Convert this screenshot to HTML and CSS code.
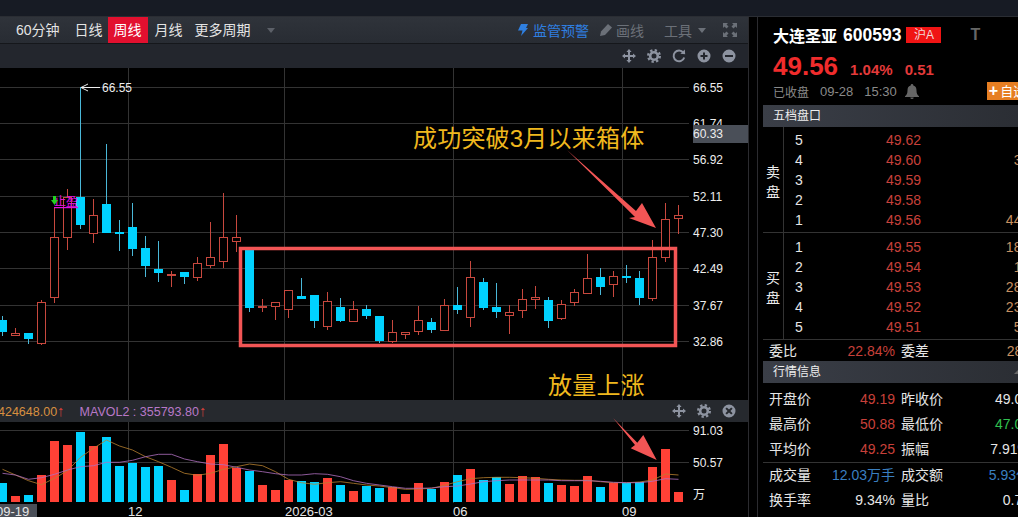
FILE: index.html
```html
<!DOCTYPE html>
<html lang="zh-CN">
<head>
    <meta charset="UTF-8">
    <title>大连圣亚 600593</title>
    <link rel="stylesheet" href="styles.css">
</head>
<body>
    <svg class="icon-defs" width="0" height="0">
        <symbol id="i-move" viewBox="0 0 14 14">
            <path d="M7 0l2.6 3H8v3h3V4.400l3 2.600-3 2.600V8H8v3h1.600L7 14l-2.600-3H6V8H3v1.600L0 7l3-2.600V6h3V3H4.400z"/>
        </symbol>
        <symbol id="i-gear" viewBox="0 0 14 14">
            <circle cx="7" cy="7" r="5.800" fill="none" stroke="currentColor" stroke-width="2.400" stroke-dasharray="2.300 2.250"/>
            <circle cx="7" cy="7" r="3.800" fill="none" stroke="currentColor" stroke-width="2.600"/>
        </symbol>
        <symbol id="i-refresh" viewBox="0 0 14 14">
            <path d="M11.300 3.600A5.400 5.400 0 1 0 12.200 8.500" fill="none" stroke="currentColor" stroke-width="2"/>
            <path d="M8.400 4.800L13.200 5.200 12.800 0.600z"/>
        </symbol>
        <symbol id="i-plus" viewBox="0 0 14 14">
            <path fill-rule="evenodd" d="M7 .5a6.500 6.500 0 1 0 0 13 6.500 6.500 0 0 0 0-13zM6 3.500h2V6h2.500v2H8v2.500H6V8H3.500V6H6z"/>
        </symbol>
        <symbol id="i-minus" viewBox="0 0 14 14">
            <path fill-rule="evenodd" d="M7 .5a6.500 6.500 0 1 0 0 13 6.500 6.500 0 0 0 0-13zM3 6h8v2H3z"/>
        </symbol>
        <symbol id="i-close" viewBox="0 0 14 14">
            <path fill-rule="evenodd" d="M7 .5a6.500 6.500 0 1 0 0 13 6.500 6.500 0 0 0 0-13zM4.800 3.400L7 5.600l2.200-2.200 1.400 1.400L8.400 7l2.200 2.200-1.400 1.400L7 8.400l-2.200 2.200-1.400-1.400L5.600 7 3.400 4.800z"/>
        </symbol>
    </svg>

    <div class="top-strip"></div>

    <div class="main">
        <!-- K line chart -->
        <div class="chart-pane">
            <div class="period-bar">
                <div class="period-tabs">
                    <span class="tab">60分钟</span>
                    <span class="tab">日线</span>
                    <span class="tab tab-active">周线</span>
                    <span class="tab">月线</span>
                    <span class="tab">更多周期</span>
                    <span class="caret caret-tabs"></span>
                </div>
                <div class="tools">
                    <svg class="tool-bolt" viewBox="0 0 10 12" width="10" height="12"><path d="M3 0h7L8 4h2L3 12l1.500-5.500H0z"/></svg>
                    <span class="tool-alert">监管预警</span>
                    <svg class="tool-pen" viewBox="0 0 12 12" width="12" height="12"><path d="M8 0l4 3.500-7 7.500-5 1 1-4.500z"/></svg>
                    <span class="tool-text">画线</span>
                    <span class="tool-text tool-gear">工具</span>
                    <span class="caret caret-tools"></span>
                    <svg class="tool-full" viewBox="0 0 14 14" width="14" height="14"><path d="M0 0h5L3.500 1.500 5.500 3.500 3.500 5.500 1.500 3.500 0 5zM14 0v5l-1.500-1.500-2 2-2-2 2-2L9 0zM0 14V9l1.500 1.500 2-2 2 2-2 2L5 14zM14 14H9l1.500-1.500-2-2 2-2 2 2L14 9z"/></svg>
                </div>
            </div>

            <div class="icon-bar">
                <svg class="bar-icon"><use href="#i-move"/></svg>
                <svg class="bar-icon"><use href="#i-gear"/></svg>
                <svg class="bar-icon"><use href="#i-refresh"/></svg>
                <svg class="bar-icon"><use href="#i-plus"/></svg>
                <svg class="bar-icon"><use href="#i-minus"/></svg>
            </div>

            <svg id="priceChart" class="price-chart" viewBox="0 68 748 332" width="748" height="332"></svg>

            <div class="vol-bar">
                <div class="vol-legend">
                    <span class="ma1">424648.00<em>↑</em></span>
                    <span class="ma2">MAVOL2 : 355793.80<em>↑</em></span>
                </div>
                <div class="vol-icons">
                    <svg class="bar-icon"><use href="#i-move"/></svg>
                    <svg class="bar-icon"><use href="#i-gear"/></svg>
                    <svg class="bar-icon"><use href="#i-close"/></svg>
                </div>
            </div>

            <svg id="volChart" class="vol-chart" viewBox="0 422 748 81" width="748" height="81"></svg>

            <div class="time-axis">
                <span class="time-now">09-19</span>
                <span class="time-mark time-12">12</span>
                <span class="time-mark time-03">2026-03</span>
                <span class="time-mark time-06">06</span>
                <span class="time-mark time-09">09</span>
            </div>

            <!-- notes drawn over the chart -->
            <svg class="overlay" viewBox="0 17 748 500" width="748" height="500">
                <rect x="240.500" y="248.500" width="435" height="97" fill="none" stroke="#f25555" stroke-width="3.500"/>
                <polygon points="567,150 636,211 642,203 656,228 629,218 635,217" fill="#f25555"/>
                <polygon points="613.300,418.300 637.300,442.700 643.300,435 656.700,460 630.700,448.300 635,445" fill="#f25555"/>
            </svg>
            <div class="note note-box">成功突破3月以来箱体</div>
            <div class="note note-vol">放量上涨</div>
        </div>

        <div class="gutter"></div>

        <!-- quote panel -->
        <div class="quote-pane">
            <div class="stock-head">
                <div class="name-row">
                    <span class="stock-name">大连圣亚</span>
                    <span class="stock-code">600593</span>
                    <span class="market-tag">沪A</span>
                    <span class="t-mark">T</span>
                </div>
                <div class="price-row">
                    <span class="last-price">49.56</span>
                    <span class="change">1.04%</span>
                    <span class="change">0.51</span>
                </div>
                <div class="status-row">
                    <span>已收盘</span>
                    <span class="status-time">09-28</span>
                    <span class="status-time">15:30</span>
                    <svg class="bell" viewBox="0 0 14 15" width="14" height="15"><path d="M7 0a1.300 1.300 0 0 1 1.300 1.400C10.800 2 11.500 4 11.500 6.500c0 3 .8 4.300 2.500 5.800v.7H0v-.7c1.700-1.500 2.500-2.800 2.500-5.800C2.500 4 3.200 2 5.700 1.400A1.300 1.300 0 0 1 7 0zM5.300 13.500h3.400a1.700 1.500 0 0 1-3.400 0z"/></svg>
                    <span class="fav-btn"><b>+</b>自选</span>
                </div>
            </div>

            <div class="section-title">五档盘口</div>

            <div class="book-group">
                <div class="book-side">卖<br>盘</div>
                <div class="book-rows">
                    <div class="book-row"><span>5</span><span class="price">49.62</span><span class="vol">8</span></div>
                    <div class="book-row"><span>4</span><span class="price">49.60</span><span class="vol">312</span></div>
                    <div class="book-row"><span>3</span><span class="price">49.59</span><span class="vol">9</span></div>
                    <div class="book-row"><span>2</span><span class="price">49.58</span><span class="vol">6</span></div>
                    <div class="book-row"><span>1</span><span class="price">49.56</span><span class="vol">4426</span></div>
                </div>
            </div>
            <div class="book-group">
                <div class="book-side">买<br>盘</div>
                <div class="book-rows">
                    <div class="book-row"><span>1</span><span class="price">49.55</span><span class="vol">1842</span></div>
                    <div class="book-row"><span>2</span><span class="price">49.54</span><span class="vol">127</span></div>
                    <div class="book-row"><span>3</span><span class="price">49.53</span><span class="vol">2815</span></div>
                    <div class="book-row"><span>4</span><span class="price">49.52</span><span class="vol">2360</span></div>
                    <div class="book-row"><span>5</span><span class="price">49.51</span><span class="vol">530</span></div>
                </div>
            </div>

            <div class="stat-row stat-ratio">
                <span>委比</span><span class="val red">22.84%</span>
                <span class="label2">委差</span><span class="val orange">281</span>
            </div>

            <div class="section-title section-quote">行情信息<span class="corner"></span></div>

            <div class="stat-group">
                <div class="stat-row">
                    <span>开盘价</span><span class="val red">49.19</span>
                    <span class="label2">昨收价</span><span class="val">49.05</span>
                </div>
                <div class="stat-row">
                    <span>最高价</span><span class="val red">50.88</span>
                    <span class="label2">最低价</span><span class="val green">47.01</span>
                </div>
                <div class="stat-row">
                    <span>平均价</span><span class="val red">49.25</span>
                    <span class="label2">振幅</span><span class="val">7.91%</span>
                </div>
            </div>
            <div class="stat-group stat-last">
                <div class="stat-row">
                    <span>成交量</span><span class="val blue">12.03万手</span>
                    <span class="label2">成交额</span><span class="val blue">5.93亿</span>
                </div>
                <div class="stat-row">
                    <span>换手率</span><span class="val">9.34%</span>
                    <span class="label2">量比</span><span class="val">0.78</span>
                </div>
            </div>
        </div>
    </div>

    <script src="chart.js"></script>
</body>
</html>
```

FILE: styles.css
```css
* {
  box-sizing: border-box;
}

html, body {
  margin: 0;
  height: 517px;
  overflow: hidden;
}

body {
  background-color: #000;
  color: #e6e6e6;
  font-family: "Liberation Sans", "Noto Sans CJK SC", sans-serif;
  font-size: 14px;
}

.icon-defs {
  position: absolute;
}

.top-strip {
  height: 17px;
  background-color: #171b24;
  border-bottom: 1px solid #2a2d33;
}

.main {
  display: flex;
  height: 500px;
}

/* Chart side */
.chart-pane {
  position: relative;
  width: 749px;
  flex: none;
  border-right: 1px solid #2b2b2f;
}

.period-bar {
  display: flex;
  justify-content: space-between;
  height: 27px;
  background: linear-gradient(#2f333a, #282c33);
  border-bottom: 1px solid #15171b;
}

.period-tabs {
  display: flex;
  align-items: center;
  padding-left: 10px;
}

.tab {
  height: 26px;
  line-height: 26px;
  padding: 0 6px;
  white-space: nowrap;
  color: #e4e4e4;
}

.tab:first-child {
  margin-right: 3px;
}

.tab-active {
  width: 40px;
  margin: 0 1px 0 -1px;
  padding: 0;
  text-align: center;
  background-color: #e2102f;
  color: #fff;
}

.caret {
  width: 0;
  height: 0;
  border-left: 4px solid transparent;
  border-right: 4px solid transparent;
  border-top: 5px solid #5c6068;
}

.caret-tabs {
  margin-left: 10px;
}

.tools {
  display: flex;
  align-items: center;
  padding-right: 11px;
}

.tool-bolt {
  fill: #2f7fe0;
  margin-right: 5px;
}

.tool-alert {
  color: #2f7fe0;
  margin-right: 11px;
}

.tool-pen {
  fill: #6b7078;
  margin-right: 4px;
}

.tool-text {
  color: #6b7078;
}

.tool-gear {
  margin-left: 20px;
}

.caret-tools {
  margin-left: 6px;
  border-top-color: #6b7078;
}

.tool-full {
  fill: #6b7078;
  margin-left: 17px;
}

.icon-bar {
  display: flex;
  justify-content: flex-end;
  align-items: center;
  gap: 11px;
  height: 24px;
  padding-right: 12px;
  background-color: #23262d;
}

.bar-icon {
  width: 14px;
  height: 14px;
  fill: #8d93a0;
  color: #8d93a0;
}

.price-chart, .vol-chart {
  display: block;
}

.vol-bar {
  display: flex;
  justify-content: space-between;
  align-items: center;
  height: 22px;
  padding-right: 12px;
  background-color: #26292e;
  font-size: 12.5px;
}

.vol-legend {
  display: flex;
  margin-left: -2px;
  gap: 15px;
  white-space: nowrap;
}

.vol-legend em {
  font-style: normal;
  font-size: 15px;
  line-height: 13px;
  color: #d8403a;
}

.ma1 {
  color: #d89040;
}

.ma2 {
  color: #b878c8;
}

.vol-icons {
  display: flex;
  gap: 11px;
}

.time-axis {
  position: relative;
  height: 14px;
  font-size: 13px;
  line-height: 17px;
  color: #e6e6e6;
}

.time-now {
  position: absolute;
  left: 0;
  top: 1px;
  width: 37px;
  height: 13px;
  overflow: hidden;
  line-height: 15px;
  text-indent: -4px;
  background-color: #4a4f58;
}

.time-mark {
  position: absolute;
}

.time-12 { left: 128px; }
.time-03 { left: 285px; }
.time-06 { left: 453px; }
.time-09 { left: 622px; }

.overlay {
  position: absolute;
  left: 0;
  top: 0;
  pointer-events: none;
}

.note {
  position: absolute;
  color: #f0b81e;
  font-size: 24px;
  line-height: 30px;
  letter-spacing: .2px;
  white-space: nowrap;
}

.note-box {
  left: 413px;
  top: 107px;
}

.note-vol {
  left: 548px;
  top: 354px;
}

/* svg text inside the charts */
.axis-label {
  fill: #eee;
  font-size: 12px;
}

.high-label {
  fill: #eee;
  font-size: 12px;
}

.signal-label {
  fill: #e010e0;
  font-size: 12px;
  text-decoration: underline;
}

/* Quote side */
.gutter {
  width: 9px;
  flex: none;
  border-right: 1px solid #2b2b2f;
}

.quote-pane {
  flex: 1;
  min-width: 0;
  padding-left: 5px;
  overflow: hidden;
}

.stock-head {
  height: 88px;
  padding: 6px 0 0 10px;
}

.name-row {
  display: flex;
  align-items: center;
  height: 24px;
  white-space: nowrap;
}

.stock-name {
  font-size: 16px;
  font-weight: bold;
  color: #fff;
}

.stock-code {
  font-size: 17.5px;
  font-weight: bold;
  color: #fff;
  margin-left: 6px;
}

.market-tag {
  width: 35px;
  height: 16px;
  margin-left: 5px;
  line-height: 16px;
  text-align: center;
  font-size: 12px;
  color: #f2d8d8;
  background-color: #f01414;
}

.t-mark {
  margin-left: 29px;
  font-size: 16px;
  font-weight: bold;
  color: #666;
}

.price-row {
  display: flex;
  align-items: baseline;
  height: 30px;
  margin-top: 4px;
  color: #f02c2c;
  font-weight: bold;
  white-space: nowrap;
}

.last-price {
  font-size: 26px;
  margin-right: 12px;
}

.change {
  font-size: 15px;
  margin-right: 12px;
}

.price-row .change {
  color: #e43a3a;
}

.status-row {
  display: flex;
  align-items: center;
  height: 20px;
  font-size: 12px;
  color: #8a8a8a;
  white-space: nowrap;
}

.status-time {
  font-size: 13px;
  margin-left: 11px;
}

.bell {
  flex: none;
  fill: #666;
  margin-left: 8px;
}

.fav-btn {
  flex: none;
  height: 18px;
  line-height: 18px;
  margin-left: 68px;
  padding-left: 2px;
  background-color: #e67e22;
  color: #fff;
  font-size: 13px;
}

.fav-btn b {
  font-size: 16px;
  margin-right: 2px;
}

.section-title {
  position: relative;
  height: 22px;
  line-height: 22px;
  padding-left: 10px;
  font-size: 12px;
  color: #eee;
  background: linear-gradient(90deg, #3a3e47, #2b2e34);
}

.corner {
  position: absolute;
  right: 0;
  bottom: 9px;
  width: 0;
  height: 0;
  border-left: 4px solid transparent;
  border-bottom: 4px solid #666;
}

.book-group {
  display: flex;
  height: 106px;
  border-bottom: 1px solid #333;
}

.book-group + .book-group {
  height: 107px;
}

.book-side {
  display: flex;
  flex: none;
  align-items: center;
  width: 21px;
  padding: 4px 0 0 3px;
  line-height: 20px;
  color: #eee;
  border-right: 1px solid #333;
}

.book-rows {
  padding-top: 3px;
}

.book-group + .book-group .book-rows {
  padding-top: 4px;
}

.book-row {
  display: grid;
  grid-template-columns: 30px 107px 116px;
  height: 20px;
  line-height: 20px;
  color: #e6e6e6;
}

.book-row span:first-child {
  text-align: center;
}

.price {
  text-align: right;
  color: #c8403a;
}

.vol {
  text-align: right;
  color: #c89060;
}

.stat-row {
  display: grid;
  grid-template-columns: 42px 84px 48px 87px;
  padding-left: 6px;
  height: 25px;
  line-height: 25px;
  white-space: nowrap;
  color: #e6e6e6;
}

.stat-ratio {
  height: 21px;
  line-height: 22px;
}

.label2 {
  padding-left: 6px;
}

.val {
  text-align: right;
}

.red {
  color: #c8403a;
}

.orange {
  color: #c89060;
}

.green {
  color: #30c050;
}

.blue {
  color: #3a7fc0;
}

.stat-group {
  padding-top: 4px;
  height: 80px;
  border-bottom: 1px solid #333;
}

.stat-last {
  padding-top: 0;
  height: auto;
  border-bottom: none;
}
```

FILE: chart.js
```js
var SVG_NS = "http://www.w3.org/2000/svg";
var RED = "#c8483e";
var CYAN = "#00d2ff";
var CYAN_WICK = "#4ab8d8";

// wick top, body top, body bottom, wick bottom, colour (r = up, c = down)
var candles = [
    [316, 320, 332, 336, "c"], [328, 333, 335, 336, "r"], [333, 333, 339, 344, "c"],
    [300, 302, 343, 345, "r"], [208, 237, 297, 303, "r"], [189, 197, 237, 250, "r"],
    [87, 197, 225, 229, "c"], [199, 215, 233, 243, "r"], [144, 204, 233, 233, "c"],
    [220, 232, 234, 251, "c"], [203, 227, 249, 256, "c"], [236, 248, 266, 277, "c"],
    [241, 269, 273, 282, "c"], [271, 274, 275, 287, "r"], [272, 272, 277, 284, "c"],
    [257, 263, 277, 281, "r"], [222, 257, 265, 268, "r"], [193, 237, 261, 268, "r"],
    [215, 237, 241, 252, "r"], [248, 248, 308, 312, "c"], [299, 306, 307, 312, "r"],
    [302, 302, 306, 320, "r"], [290, 290, 309, 318, "r"], [278, 296, 299, 299, "c"],
    [295, 295, 321, 328, "c"], [292, 301, 326, 330, "r"], [298, 307, 321, 322, "c"],
    [301, 309, 321, 322, "r"], [305, 309, 316, 319, "c"], [316, 316, 341, 343, "c"],
    [320, 332, 341, 343, "r"], [332, 332, 334, 339, "r"], [306, 320, 331, 335, "r"],
    [318, 322, 330, 333, "c"], [299, 305, 330, 331, "r"], [287, 305, 310, 314, "c"],
    [261, 277, 317, 327, "r"], [278, 282, 308, 310, "c"], [283, 307, 312, 318, "c"],
    [305, 312, 315, 334, "r"], [289, 299, 310, 318, "r"], [286, 297, 299, 309, "r"],
    [297, 300, 321, 328, "c"], [300, 304, 318, 320, "r"], [289, 292, 302, 306, "r"],
    [254, 278, 293, 294, "r"], [268, 277, 287, 295, "c"], [271, 276, 284, 297, "r"],
    [265, 276, 277, 283, "c"], [271, 278, 298, 305, "c"], [240, 257, 298, 301, "r"],
    [203, 219, 257, 262, "r"], [205, 215, 218, 234, "r"]
];

var volumeTops = [
    483, 496, 495, 475, 441, 445, 432, 446, 437, 466, 463, 467, 466, 480, 490, 474, 455, 444,
    468, 471, 485, 490, 480, 481, 482, 478, 485, 491, 486, 488, 487, 494, 483, 489, 482, 475,
    469, 480, 477, 484, 476, 477, 483, 485, 486, 476, 487, 483, 483, 482, 467, 449, 492
];

var mavol1 = [
    469.3, 475, 480.7, 484.7, 478.3, 470.7, 457.3, 448.3, 440, 446, 450, 456.7, 461.7, 467.3,
    473.3, 475.3, 473.3, 469.3, 466.7, 464, 465.7, 471.7, 479.3, 482.7, 484.3, 482.7, 481.7,
    483.3, 485, 486, 487.7, 489.3, 489, 488.3, 485.3, 481.7, 478.7, 477.7, 477.3, 477.3, 477.7,
    478.3, 479.3, 480, 480.3, 480.3, 481.7, 482.7, 482.7, 482, 480, 474, 475
];

var mavol2 = [
    473.3, 475, 479.3, 477.7, 474.3, 470, 466.7, 465.7, 462.3, 462.3, 460.3, 456.7, 454.3, 454.3,
    459, 461.7, 464, 464.7, 467.3, 470, 471.7, 473.7, 475, 475, 473.7, 474.3, 476.7, 480.7, 483.3,
    485, 486.7, 488.3, 488.3, 488, 486.7, 486, 484, 481.7, 480.7, 480, 480, 480, 480, 480.7, 480.7,
    480.7, 481.3, 482.3, 482.7, 482.7, 481.3, 478.7, 479.3
];

var gridX = [128.5, 284.5, 453.5, 622.5];

function add(parent, name, attrs, text) {
    var el = document.createElementNS(SVG_NS, name);
    for (var key in attrs) {
        el.setAttribute(key, attrs[key]);
    }
    if (text) {
        el.textContent = text;
    }
    parent.appendChild(el);
    return el;
}

function candleX(i) {
    return 2.5 + 13 * i;
}

function line(parent, x1, y1, x2, y2, color) {
    add(parent, "line", { x1: x1, y1: y1, x2: x2, y2: y2, stroke: color, "stroke-width": 1 });
}

function axisLabel(parent, y, text) {
    add(parent, "text", { x: 693, y: y + 4.5, "class": "axis-label" }, text);
}

function drawPriceChart() {
    var svg = document.getElementById("priceChart");
    var gridY = [87.5, 123.5, 159.5, 196.5, 232.5, 268.5, 305.5, 341.5];
    var labels = ["66.55", "61.74", "56.92", "52.11", "47.30", "42.49", "37.67", "32.86"];

    gridX.forEach(function (x) {
        line(svg, x, 68, x, 400, "#333");
    });
    gridY.forEach(function (y, i) {
        line(svg, 0, y, 689, y, "#333");
        axisLabel(svg, y, labels[i]);
    });

    // current price tag sits on top of the 61.74 label
    add(svg, "rect", { x: 693, y: 125, width: 55, height: 18, fill: "#4a4f58" });
    axisLabel(svg, 133.5, "60.33");

    candles.forEach(function (c, i) {
        var x = candleX(i);
        var isUp = c[4] === "r";
        line(svg, x, c[0], x, isUp ? c[1] : c[0] === c[1] ? c[2] : c[1], isUp ? RED : CYAN_WICK);
        line(svg, x, c[2], x, c[3], isUp ? RED : CYAN_WICK);
        if (isUp) {
            add(svg, "rect", { x: x - 4, y: c[1] + 0.5, width: 8, height: c[2] - c[1], fill: "#000", stroke: RED });
        } else {
            add(svg, "rect", { x: x - 4.5, y: c[1], width: 9, height: Math.max(c[2] - c[1], 2), fill: CYAN });
        }
    });

    // highest price marker
    line(svg, 81, 87.5, 100, 87.5, "#eee");
    add(svg, "path", { d: "M88 84L81 87.500 88 91", fill: "none", stroke: "#eee" });
    add(svg, "text", { x: 102, y: 92, "class": "high-label" }, "66.55");

    // buy/sell signal
    add(svg, "text", { x: 54, y: 206, "class": "signal-label" }, "止盈");
    add(svg, "path", { d: "M53 196h3v4h2l-3.500 5-3.500-5h2z", fill: "#22d022" });
}

function drawVolChart() {
    var svg = document.getElementById("volChart");
    var base = 502;

    gridX.forEach(function (x) {
        line(svg, x, 422, x, 503, "#333");
    });
    line(svg, 0, 430.5, 689, 430.5, "#333");
    line(svg, 0, 462.5, 689, 462.5, "#333");
    axisLabel(svg, 430.5, "91.03");
    axisLabel(svg, 462.5, "50.57");
    add(svg, "text", { x: 693, y: 499, "class": "axis-label" }, "万");

    volumeTops.forEach(function (top, i) {
        add(svg, "rect", {
            x: candleX(i) - 4.5,
            y: top,
            width: 9,
            height: base - top,
            fill: candles[i][4] === "r" ? "#ff4136" : CYAN
        });
    });

    drawAverage(svg, mavol1, "#b8802e");
    drawAverage(svg, mavol2, "#b070c0");
}

function drawAverage(svg, values, color) {
    var points = values.map(function (y, i) {
        return candleX(i) + "," + y;
    });
    add(svg, "polyline", { points: points.join(" "), fill: "none", stroke: color, "stroke-width": 0.8 });
}

drawPriceChart();
drawVolChart();
```
